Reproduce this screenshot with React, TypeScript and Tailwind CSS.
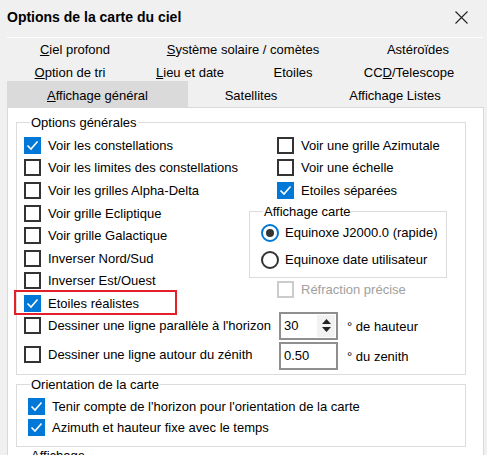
import React from "react";
import clsx from "clsx";

function Box({ checked, disabled }: { checked?: boolean; disabled?: boolean }) {
  if (checked) {
    return (
      <span className="w-[17px] h-[17px] shrink-0 bg-[#0078d7] flex items-center justify-center">
        <svg width="17" height="17" viewBox="0 0 17 17">
          <polyline points="3.5,8.5 7,12 13.5,4.5" fill="none" stroke="white" strokeWidth="1.6" />
        </svg>
      </span>
    );
  }
  return (
    <span
      className={clsx(
        "w-[17px] h-[17px] shrink-0 border-2 bg-white",
        disabled ? "border-[#cccccc]" : "border-[#333333]"
      )}
    />
  );
}

function CheckRow({
  label,
  checked,
  disabled,
  className,
}: {
  label: string;
  checked?: boolean;
  disabled?: boolean;
  className?: string;
}) {
  return (
    <div className={clsx("flex items-center whitespace-nowrap", className)}>
      <Box checked={checked} disabled={disabled} />
      <span className={clsx("ml-[7px]", disabled && "text-[#a0a0a0]")}>{label}</span>
    </div>
  );
}

function Radio({ label, selected }: { label: string; selected?: boolean }) {
  return (
    <div className="flex items-center h-[27px] whitespace-nowrap">
      <span
        className={clsx(
          "w-[18px] h-[18px] rounded-full border-2 bg-white flex items-center justify-center",
          selected ? "border-[#0078d7]" : "border-[#333333]"
        )}
      >
        {selected && <span className="w-[8px] h-[8px] rounded-full bg-[#333333]" />}
      </span>
      <span className="ml-[6px]">{label}</span>
    </div>
  );
}

function Tab({ w, children, className }: { w: string; children: React.ReactNode; className?: string }) {
  return <div className={clsx("flex items-center justify-center whitespace-nowrap", w, className)}>{children}</div>;
}

export default function App() {
  return (
    <div className="w-[487px] h-[455px] overflow-hidden bg-[#f0f0f0] text-[13px] leading-[15px] text-black font-['Liberation_Sans',Arial,sans-serif]">
      {/* title bar */}
      <div className="h-[37px] flex items-center justify-between pl-[7px] pr-[19px] pb-[3px]">
        <span className="text-[14px] font-bold">Options de la carte du ciel</span>
        <svg width="13" height="13" viewBox="0 0 13 13">
          <path d="M0.5 0.5 L12.5 12.5 M12.5 0.5 L0.5 12.5" stroke="#222" strokeWidth="1.1" />
        </svg>
      </div>

      {/* tabs */}
      <div className="ml-[7px] w-[476px] border-t border-white">
        <div className="flex h-[23px]">
          <Tab w="w-[136px]">
            <span><span className="underline">C</span>iel profond</span>
          </Tab>
          <Tab w="w-[200px]">
            <span><span className="underline">S</span>ystème solaire / comètes</span>
          </Tab>
          <Tab w="w-[140px]" className="pl-[10px]">Astéroïdes</Tab>
        </div>
        <div className="flex h-[23px]">
          <Tab w="w-[126px]">
            <span><span className="underline">O</span>ption de tri</span>
          </Tab>
          <Tab w="w-[114px]">
            <span><span className="underline">L</span>ieu et date</span>
          </Tab>
          <Tab w="w-[92px]">Etoiles</Tab>
          <Tab w="w-[140px]">
            <span>CC<span className="underline">D</span>/Telescope</span>
          </Tab>
        </div>
        <div className="flex h-[23px] items-end">
          <Tab w="w-[181px]" className="h-[26px] pt-[3px] bg-[#dadada]">
            <span><span className="underline">A</span>ffichage général</span>
          </Tab>
          <Tab w="w-[126px]" className="h-[23px]">Satellites</Tab>
          <Tab w="w-[162px]" className="h-[23px]">Affichage Listes</Tab>
        </div>
      </div>

      {/* page */}
      <div className="ml-[7px] w-[477px] h-[360px] bg-white border border-[#d9d9d9] pl-[8px] pt-[7px]">
        <fieldset className="w-[450px] border border-[#dcdcdc] pl-[7px] pt-[4px] pb-[4px]">
          <legend className="ml-[6px] px-[1px]">Options générales</legend>
          <div className="flex">
            <div className="w-[225px] flex flex-col">
              <CheckRow className="h-[22.6px]" checked label="Voir les constellations" />
              <CheckRow className="h-[22.6px]" label="Voir les limites des constellations" />
              <CheckRow className="h-[22.6px]" label="Voir les grilles Alpha-Delta" />
              <CheckRow className="h-[22.6px]" label="Voir grille Ecliptique" />
              <CheckRow className="h-[22.6px]" label="Voir grille Galactique" />
              <CheckRow className="h-[22.6px]" label="Inverser Nord/Sud" />
              <CheckRow className="h-[22.6px]" label="Inverser Est/Ouest" />
              <div className="relative">
                <CheckRow className="h-[22.6px]" checked label="Etoiles réalistes" />
                <span className="absolute left-[-10px] top-[-2px] w-[163px] h-[25px] border-2 border-[#e3202a]" />
              </div>
            </div>
            <div className="w-[198px] flex flex-col">
              <CheckRow className="h-[22.6px] pl-[28px]" label="Voir une grille Azimutale" />
              <CheckRow className="h-[22.6px] pl-[28px]" label="Voir une échelle" />
              <CheckRow className="h-[22.6px] pl-[28px]" checked label="Etoiles séparées" />
              <fieldset className="mt-[2.5px] border border-[#dcdcdc] pl-[11px] pb-[4px]">
                <legend className="ml-[2px] px-[1px]">Affichage carte</legend>
                <Radio selected label="Equinoxe J2000.0 (rapide)" />
                <Radio label="Equinoxe date utilisateur" />
              </fieldset>
              <CheckRow className="h-[22px] pl-[28px]" disabled label="Réfraction précise" />
            </div>
          </div>

          <div className="flex items-center h-[28px] -mt-[3px]">
            <CheckRow className="w-[255px]" label="Dessiner une ligne parallèle à l'horizon" />
            <div className="w-[59px] h-[28px] border-2 border-[#8f8f8f] flex">
              <span className="flex-1 pl-[3px] flex items-center">30</span>
              <span className="w-[18px] my-[1px] mr-[1px] bg-[#f2f2f2] flex flex-col items-center justify-center gap-[3px]">
                <svg width="9" height="5" viewBox="0 0 9 5">
                  <polygon points="0,5 9,5 4.5,0" fill="#222" />
                </svg>
                <svg width="9" height="5" viewBox="0 0 9 5">
                  <polygon points="0,0 9,0 4.5,5" fill="#222" />
                </svg>
              </span>
            </div>
            <span className="ml-[9px] pt-[1px]">° de hauteur</span>
          </div>

          <div className="flex items-center h-[28px] mt-[2px]">
            <CheckRow className="w-[255px] -mt-[2px]" label="Dessiner une ligne autour du zénith" />
            <div className="w-[59px] h-[28px] border-2 border-[#8f8f8f] flex items-center pl-[3px]">0.50</div>
            <span className="ml-[9px] pt-[1px]">° du zenith</span>
          </div>
        </fieldset>

        <fieldset className="mt-[2px] w-[450px] border border-[#dcdcdc] pl-[11px] pt-[4.5px] pb-[8px]">
          <legend className="ml-[2px] px-[1px]">Orientation de la carte</legend>
          <CheckRow className="h-[21px]" checked label="Tenir compte de l'horizon pour l'orientation de la carte" />
          <CheckRow className="h-[21px]" checked label="Azimuth et hauteur fixe avec le temps" />
        </fieldset>

        <fieldset className="mt-[1px] w-[450px] h-[40px] border border-[#dcdcdc] pl-[11px]">
          <legend className="ml-[2px] px-[1px]">Affichage</legend>
        </fieldset>
      </div>
    </div>
  );
}
